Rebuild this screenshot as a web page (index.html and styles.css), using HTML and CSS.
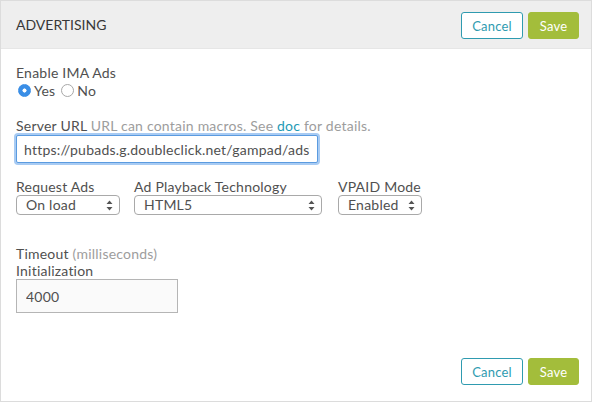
FILE: index.html
```html
<!DOCTYPE html>
<html>
<head>
<meta charset="utf-8">
<link rel="stylesheet" href="styles.css">
</head>
<body>
<div class="panel">
  <div class="header">
    <h2 class="title">ADVERTISING</h2>
    <div class="actions">
      <button class="btn btn-cancel">Cancel</button>
      <button class="btn btn-save">Save</button>
    </div>
  </div>
  <div class="content">
    <div class="field field-ima">
      <div class="label">Enable IMA Ads</div>
      <div class="radios">
        <label class="radio"><input type="radio" name="ima" checked><span>Yes</span></label>
        <label class="radio"><input type="radio" name="ima"><span>No</span></label>
      </div>
    </div>
    <div class="field field-url">
      <div class="label">Server URL <span class="hint">URL can contain macros. See <a class="link" href="#">doc</a> for details.</span></div>
      <input class="text-input url-input" type="text" value="https://pubads.g.doubleclick.net/gampad/ads?sz=640x480">
    </div>
    <div class="select-row">
      <div class="field">
        <div class="label">Request Ads</div>
        <select class="select select-request"><option>On load</option></select>
      </div>
      <div class="field">
        <div class="label">Ad Playback Technology</div>
        <select class="select select-tech"><option>HTML5</option></select>
      </div>
      <div class="field">
        <div class="label">VPAID Mode</div>
        <select class="select select-vpaid"><option>Enabled</option></select>
      </div>
    </div>
    <div class="field field-timeout">
      <div class="label">Timeout <span class="hint">(milliseconds)</span></div>
      <div class="label">Initialization</div>
      <input class="text-input timeout-input" type="text" value="4000">
    </div>
  </div>
  <div class="footer">
    <button class="btn btn-cancel">Cancel</button>
    <button class="btn btn-save">Save</button>
  </div>
</div>
</body>
</html>
```
FILE: styles.css
```css
html, body {
  margin: 0;
  padding: 0;
  background: #ffffff;
}
body {
  font-family: "Lato", "Liberation Sans", sans-serif;
  color: #505050;
  font-size: 14px;
  letter-spacing: 0.22px;
}
.panel {
  width: 592px;
  height: 402px;
  box-sizing: border-box;
  border: 1px solid #dcdcdc;
  display: flex;
  flex-direction: column;
}
.header {
  height: 47px;
  background: #eeeeee;
  border-bottom: 1px solid #e6e6e6;
  display: flex;
  align-items: center;
  justify-content: space-between;
  padding: 0 12px 0 15px;
  flex-shrink: 0;
}
.title {
  margin: 0;
  font-weight: normal;
  font-size: 14px;
  color: #383838;
  letter-spacing: 0;
}
.actions {
  display: flex;
  gap: 5px;
  padding-top: 2px;
}
.btn {
  font-family: inherit;
  font-size: 13px;
  letter-spacing: 0.2px;
  height: 27px;
  border-radius: 3px;
  padding: 0 9px;
  cursor: pointer;
}
.btn-cancel {
  background: #ffffff;
  border: 1px solid #2f9bb0;
  color: #2f9bb0;
  width: 62px;
}
.btn-save {
  background: #a3bd3b;
  border: 1px solid #a3bd3b;
  color: #ffffff;
  width: 51px;
}
.content {
  flex: 1;
  padding: 15px 15px 0 15px;
}
.field {
  display: flex;
  flex-direction: column;
  align-items: flex-start;
}
.label {
  line-height: 17px;
  color: #505050;
}
.hint {
  color: #9d9d9d;
}
.link {
  color: #1f9ab5;
  text-decoration: none;
}
.radios {
  display: flex;
  gap: 4px;
  margin-top: 1px;
  height: 17px;
}
.radio {
  display: flex;
  align-items: center;
  gap: 3px;
  line-height: 17px;
}
.radio input {
  -webkit-appearance: none;
  appearance: none;
  margin: 0 0 0 2px;
  width: 13px;
  height: 13px;
  border-radius: 50%;
  border: 1px solid #a8a8a8;
  background: #ffffff;
  box-sizing: border-box;
}
.radio input:checked {
  border-color: #3a8ee6;
  background: radial-gradient(circle, #ffffff 0 1.8px, #3a8ee6 2.3px);
}
.field-url {
  margin-top: 18px;
}
.text-input {
  font-family: inherit;
  font-size: 14px;
  letter-spacing: 0.22px;
  color: #505050;
  box-sizing: border-box;
  margin: 0;
}
.url-input {
  width: 302px;
  height: 28px;
  margin-top: 1px;
  padding: 0 7px;
  border: 1px solid #5b9be0;
  border-radius: 2px;
  box-shadow: 0 0 0 2px #a8cbf3;
  outline: none;
}
.select-row {
  display: flex;
  margin-top: 15px;
}
.select-row .field:nth-child(2) {
  margin-left: 14px;
}
.select-row .field:nth-child(3) {
  margin-left: 16px;
}
.select {
  -webkit-appearance: none;
  appearance: none;
  font-family: inherit;
  font-size: 14px;
  letter-spacing: 0.22px;
  color: #505050;
  height: 20px;
  margin: 0;
  border: 1px solid #a9a9a9;
  border-radius: 4px;
  background-color: #ffffff;
  background-image: url("data:image/svg+xml,%3Csvg xmlns='http://www.w3.org/2000/svg' width='7' height='11' viewBox='0 0 7 11'%3E%3Cpath d='M3.5 0.5L6.5 4H0.5Z M3.5 10.5L6.5 7H0.5Z' fill='%23555'/%3E%3C/svg%3E");
  background-repeat: no-repeat;
  background-position: right 6px center;
  padding: 0 20px 0 9px;
  box-sizing: border-box;
  line-height: 18px;
}
.select-request { width: 104px; }
.select-tech { width: 188px; }
.select-vpaid { width: 84px; }
.field-timeout {
  margin-top: 30px;
}
.timeout-input {
  width: 162px;
  height: 34px;
  margin-top: 0;
  padding: 0 9px;
  border: 1px solid #b5b5b5;
  background: #fafafa;
  border-radius: 0;
  outline: none;
}
.footer {
  display: flex;
  justify-content: flex-end;
  gap: 5px;
  padding: 0 12px 16px 0;
}
```
